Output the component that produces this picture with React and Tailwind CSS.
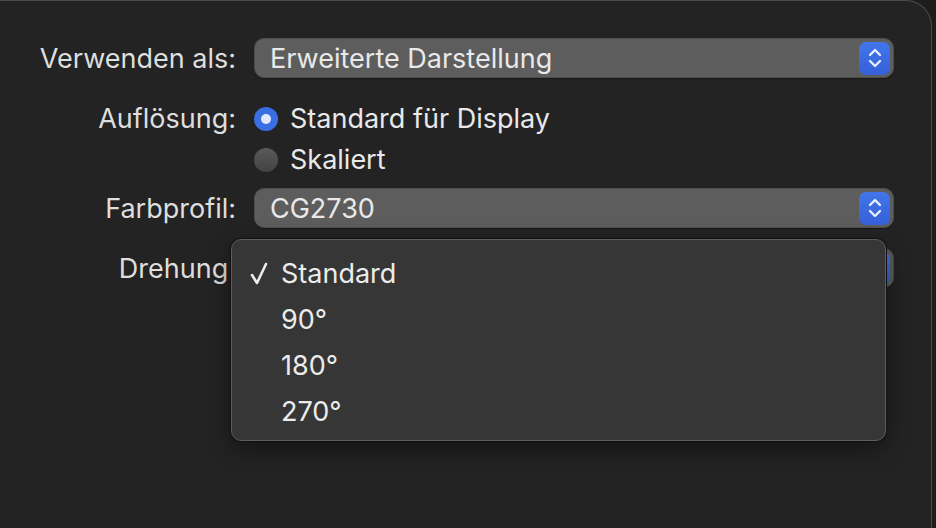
const FONT = { fontFamily: 'Inter, "Noto Sans", "Liberation Sans", sans-serif' }

function Stepper() {
  return (
    <div className="w-[31px] h-[33px] rounded-[7px] bg-gradient-to-b from-[#4175ea] to-[#3560d8] flex items-center justify-center">
      <svg width="16" height="24" viewBox="0 0 16 24" fill="none" stroke="#e8edff" strokeWidth="2.4" strokeLinecap="round" strokeLinejoin="round">
        <path d="M3 9 L8 4 L13 9" />
        <path d="M3 15 L8 20 L13 15" />
      </svg>
    </div>
  )
}

function Popup({ value }) {
  return (
    <div className="h-[40px] w-[640px] rounded-[10px] bg-[#5d5d5d] border border-[#4e4e4e] shadow-[0_1px_1px_rgba(0,0,0,0.35)] flex items-center justify-between pl-[15px] pr-[3px]">
      <span className="text-[27px] text-[#e9e9e9] leading-none">{value}</span>
      <Stepper />
    </div>
  )
}

function Label({ children }) {
  return (
    <div className="w-[236px] text-right text-[27px] text-[#dedede] leading-none shrink-0">{children}</div>
  )
}

function Radio({ checked, label }) {
  return (
    <div className="flex items-center gap-[12px]">
      {checked ? (
        <div className="w-[24px] h-[24px] rounded-full bg-[#3a6ee3] flex items-center justify-center">
          <div className="w-[10px] h-[10px] rounded-full bg-[#e4e9ff]" />
        </div>
      ) : (
        <div className="w-[24px] h-[24px] rounded-full bg-gradient-to-b from-[#5a5a5a] to-[#434343]" />
      )}
      <span className="text-[27px] text-[#e9e9e9] leading-none">{label}</span>
    </div>
  )
}

const ITEMS = ['Standard', '90°', '180°', '270°']

export default function App() {
  return (
    <div className="w-[936px] h-[528px] bg-[#1d1d1d] overflow-hidden" style={FONT}>
      <div className="relative w-[932px] h-[560px] bg-[#232323] border-t border-r border-[#4b4b4b] rounded-tr-[26px]">
        <div className="flex flex-col pt-[37px]">
          <div className="flex items-center gap-[18px] h-[40px]">
            <Label>Verwenden als:</Label>
            <Popup value="Erweiterte Darstellung" />
          </div>
          <div className="flex items-center gap-[18px] h-[41px] mt-[20px]">
            <Label>Auflösung:</Label>
            <Radio checked label="Standard für Display" />
          </div>
          <div className="flex items-center gap-[18px] h-[41px]">
            <Label></Label>
            <Radio label="Skaliert" />
          </div>
          <div className="flex items-center gap-[18px] h-[40px] mt-[8px]">
            <Label>Farbprofil:</Label>
            <Popup value="CG2730" />
          </div>
          {/* popup underneath the open menu; its value is hidden by the menu */}
          <div className="flex items-center gap-[18px] h-[40px] mt-[20px]">
            <Label>Drehung:</Label>
            <Popup value="" />
          </div>
        </div>

        {/* open rotation menu */}
        <div className="absolute left-[231px] top-[238px] w-[655px] h-[202px] rounded-[10px] bg-[#363636] border border-[#5e5e5e] shadow-[0_0_0_1px_#111,0_8px_24px_rgba(0,0,0,0.45)] pt-[10px]">
          {ITEMS.map((item, i) => (
            <div key={item} className="h-[46px] flex items-center">
              <div className="w-[49px] flex justify-end pr-[12px]">
                {i === 0 && (
                  <svg width="20" height="24" viewBox="0 0 20 24" fill="none" stroke="#ececec" strokeWidth="2.6" strokeLinecap="round" strokeLinejoin="round">
                    <path d="M3 14 L8 22 L17 3" />
                  </svg>
                )}
              </div>
              <span className="text-[27px] text-[#ececec] leading-none">{item}</span>
            </div>
          ))}
        </div>
      </div>
    </div>
  )
}
